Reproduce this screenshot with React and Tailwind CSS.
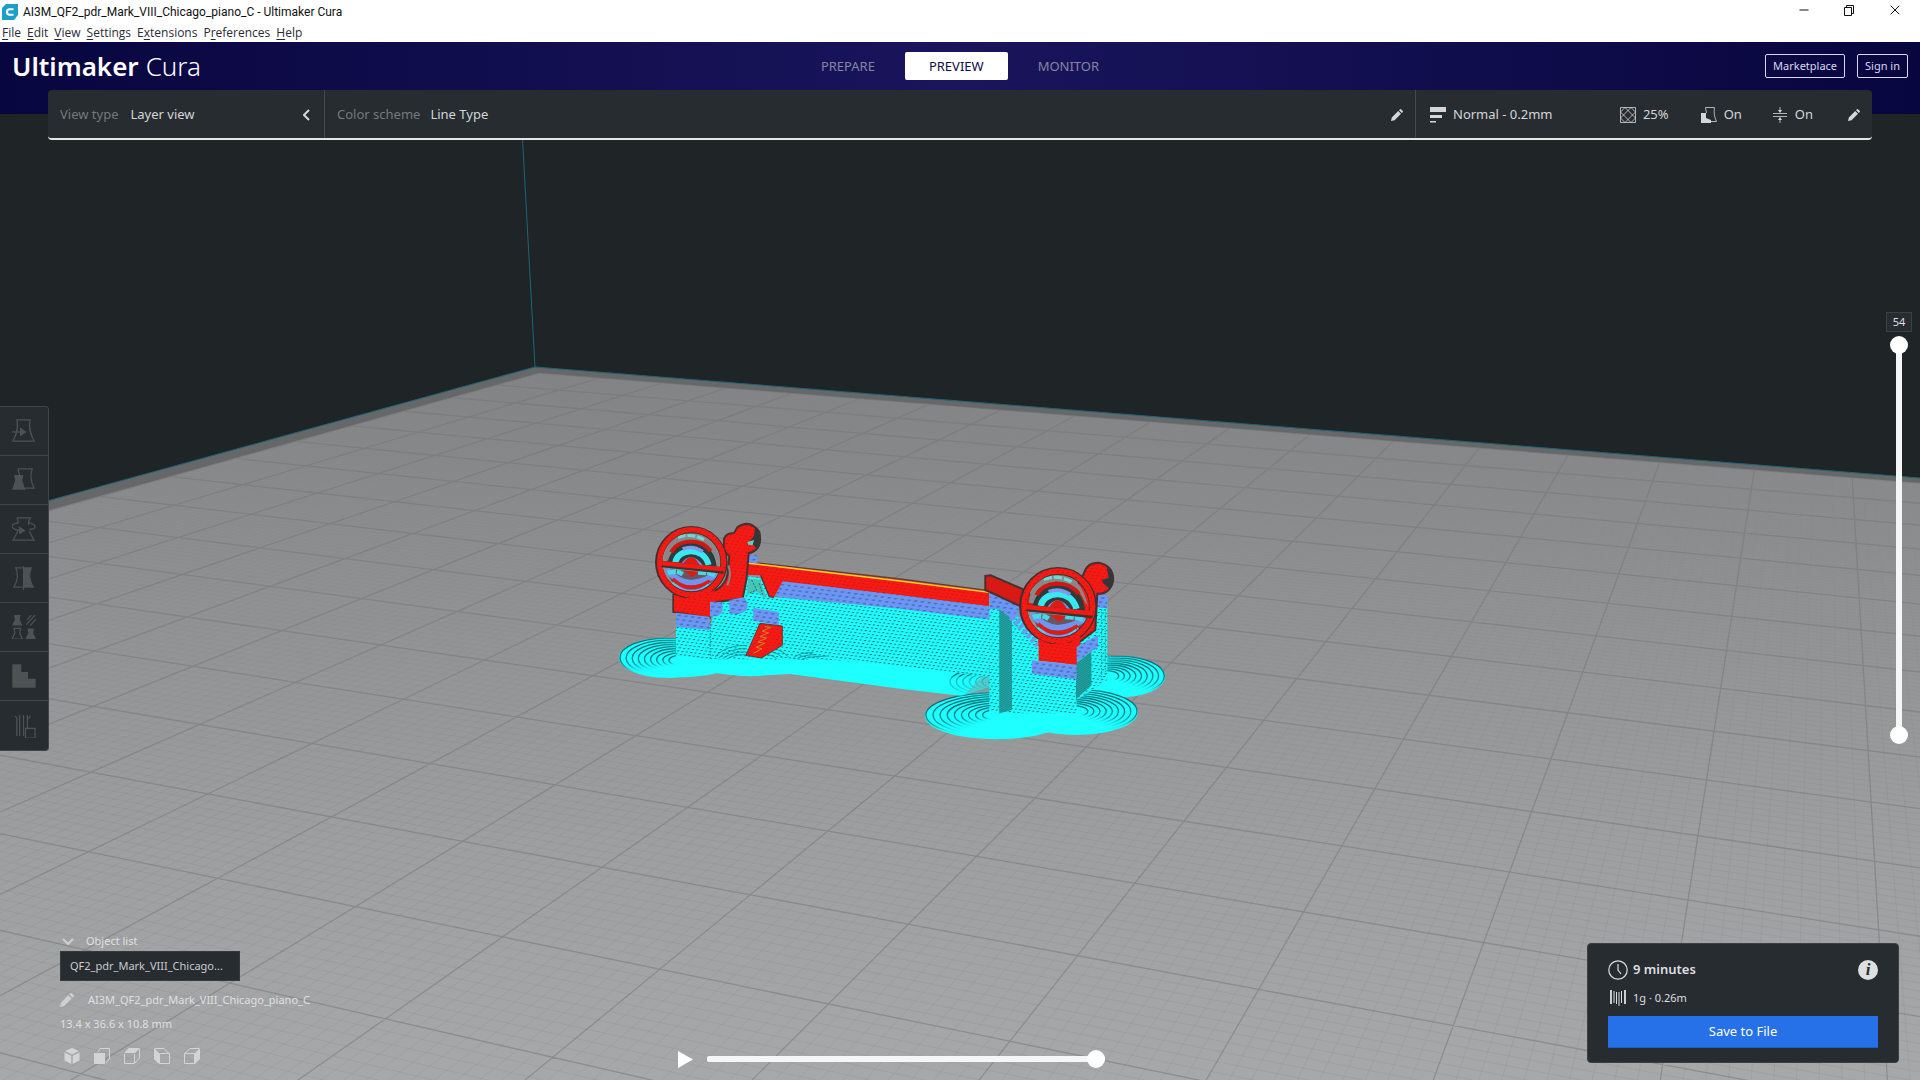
import { useState } from "react";
import { Minus, X } from "lucide-react";

const MENUS = [
  ["", "F", "ile"],
  ["", "E", "dit"],
  ["", "V", "iew"],
  ["", "S", "ettings"],
  ["E", "x", "tensions"],
  ["P", "r", "eferences"],
  ["", "H", "elp"],
];

const STAGES = ["PREPARE", "PREVIEW", "MONITOR"];

// Build plate projection: both vanishing points sit on the same horizon
const CORNER = { x: 539, y: 373 };
const HORIZON = 11;
const VANISH_A = -4000;
const VANISH_B = 1825;
const STEP_A = 0.0132;
const STEP_B = 0.0318;

const project = (i, j) => {
  const a = STEP_A * i;
  const b = STEP_B * j;
  const w = 1 - a - b;
  return [(CORNER.x - VANISH_A * a - VANISH_B * b) / w, (CORNER.y - HORIZON * (a + b)) / w];
};

const segment = (from, to) => {
  const [x1, y1] = project(...from);
  const [x2, y2] = project(...to);
  return `M${x1.toFixed(1)} ${y1.toFixed(1)}L${x2.toFixed(1)} ${y2.toFixed(1)}`;
};

const gridPath = (step) => {
  const parts = [];
  for (let n = 0; n <= 21 / step; n += 1) {
    const k = n * step;
    parts.push(segment([k, 0], [k, (0.88 - STEP_A * k) / STEP_B]));
    parts.push(segment([0, k], [(0.88 - STEP_B * k) / STEP_A, k]));
  }
  return parts.join("");
};

const MAJOR_GRID = gridPath(1);
const MINOR_GRID = gridPath(0.1);

const Rings = ({ cx, cy, rx, ry, dx = 0, dy = 0, stroke }) => (
  <g fill="none" stroke={stroke} strokeWidth="4">
    {[0, 1, 2, 3, 4, 5, 6, 7, 8].map((n) => (
      <ellipse key={n} cx={cx + dx * n} cy={cy + dy * n} rx={rx - n * (rx / 11)} ry={ry - n * (ry / 11)} />
    ))}
  </g>
);

const Wheel = ({ x, y, size = 1 }) => (
  <g transform={`translate(${x} ${y}) scale(${size})`}>
    <path d="M-72 4C-70 -78 72 -92 76 18Z" fill="#2f3a3c" />
    <path d="M-82 -10Q-74 -84 0 -90Q66 -86 84 0L74 -14Q52 -66 0 -68Q-50 -62 -70 -6Z" fill="#87888a" />
    <path d="M-60 -30C-40 -72 30 -74 58 -34" fill="none" stroke="#d01812" strokeWidth="12" />
    <path d="M-40 -74Q-4 -90 38 -68" fill="none" stroke="#6adcd6" strokeWidth="9" strokeDasharray="24 5" />
    <path d="M-48 0C-42 -40 36 -52 52 8" fill="none" stroke="#38eaf0" strokeWidth="18" />
    <path d="M-26 -40Q4 -52 34 -32" fill="none" stroke="#7f98f0" strokeWidth="11" />
    <path d="M-32 6Q0 -42 38 14Z" fill="#6f95f0" />
    <path d="M-24 2Q2 -38 26 10Z" fill="#dd1a14" />
    <path d="M-70 20Q-66 78 -6 92Q54 84 78 34Z" fill="#6d5560" />
    <path d="M-74 22Q-40 60 0 62Q50 56 76 34" fill="none" stroke="#6f95f0" strokeWidth="18" />
    <path d="M-70 32Q-46 22 -26 36M20 30Q54 30 74 40" fill="none" stroke="#45dbe6" strokeWidth="14" strokeDasharray="24 3" />
    <path d="M-56 50Q-10 96 56 56" fill="none" stroke="#dd1a14" strokeWidth="11" />
    <path d="M-50 68Q-4 106 52 70" fill="none" stroke="#8b99ef" strokeWidth="10" />
    <path d="M-58 62L-36 82M32 84L58 64" stroke="#45dbe6" strokeWidth="10" strokeDasharray="12 3" />
    <path d="M-24 24L22 28L4 44Z" fill="#dd1a14" />
    <ellipse rx="98" ry="98" fill="none" stroke="#40302f" strokeWidth="22" />
    <ellipse rx="96" ry="98" cx="1" fill="none" stroke="url(#red)" strokeWidth="16" />
    <path d="M-88 5L98 25" stroke="#40302f" strokeWidth="19" />
    <path d="M-92 2L98 21" stroke="#ee1c14" strokeWidth="13" />
  </g>
);

const Model = () => (
  <g transform="translate(600 500) scale(0.3333)">
    {/* brim */}
    <g fill="#1effff">
      <ellipse cx="196" cy="473" rx="139" ry="60" />
      <ellipse cx="450" cy="470" rx="150" ry="58" />
      <path d="M200 533Q290 534 350 520Q420 532 480 527L570 522L900 566L1090 588L1170 505L620 440H220Z" />
      <ellipse cx="1190" cy="648" rx="215" ry="70" />
      <ellipse cx="1430" cy="637" rx="184" ry="68" />
      <ellipse cx="1560" cy="530" rx="136" ry="62" />
    </g>
    <Rings cx={196} cy={473} rx={136} ry={58} dx={6} dy={1} stroke="url(#fadeRight)" />
    <Rings cx={1190} cy={645} rx={212} ry={67} dx={2} stroke="url(#fadeRight)" />
    <Rings cx={1240} cy={545} rx={190} ry={50} dx={2} stroke="url(#fadeRight)" />
    <Rings cx={1430} cy={634} rx={181} ry={65} dx={-2} stroke="url(#fadeLeft)" />
    <Rings cx={1560} cy={528} rx={133} ry={59} dx={-5} stroke="url(#fadeLeft)" />
    <path d="M1000 540L1170 520V560L1080 590Z" fill="#1effff" opacity="0.5" />

    {/* support wall */}
    <path d="M228 378L330 388L350 300L430 290L440 228L480 234L515 290L900 322L1168 354V530L960 505L700 480L330 478L228 468Z" fill="url(#cyan)" />
    <g fill="none" stroke="#128088" strokeWidth="3" strokeOpacity="0.75">
      <path d="M345 470Q380 434 440 436M356 474Q390 444 440 446M368 476Q396 454 440 456M380 478Q402 462 440 464" />
      <path d="M520 446Q550 452 566 472M510 454Q536 460 548 474M500 462Q520 466 530 476" />
      <path d="M580 474Q600 456 640 458M592 476Q610 464 650 464M604 478Q624 470 680 468" />
    </g>
    <path d="M331 345V478" stroke="#168a8a" strokeWidth="3" strokeDasharray="5 4" />
    <path d="M445 235L480 240L500 295L470 275L440 285Z" fill="#46c4b8" />
    <path d="M455 240L470 270L450 278M478 250L490 290" stroke="#20706c" strokeWidth="3" fill="none" strokeDasharray="6 4" />
    <path d="M540 243L900 283L1168 316V358L900 326L525 290Z" fill="url(#blue)" />

    {/* beam */}
    <path d="M425 186L900 240L1168 275V318L900 285L548 244L522 292L508 288L482 226L430 224Z" fill="url(#red)" />
    <path d="M482 226L508 290L522 292" fill="none" stroke="#56302f" strokeWidth="4" />
    <path d="M430 184L900 237L1168 272" fill="none" stroke="#6b3a25" strokeWidth="4" />
    <path d="M440 189L900 243L1168 277" fill="none" stroke="#ffd02a" strokeWidth="4" />

    {/* left carriage */}
    <path d="M425 162L472 166V190L425 186Z" fill="url(#blue)" />
    <path d="M372 130Q368 100 402 99L412 82Q450 56 478 96Q490 148 446 160L440 235L428 296L350 306L330 352L220 336V285Q380 300 384 210L388 168Q368 156 372 130Z" fill="url(#red)" stroke="#4a302f" strokeWidth="6" />
    <path d="M466 80Q488 108 474 148L456 132L440 134L462 108Z" fill="#2f393b" />
    <path d="M442 126L462 120L458 136L444 134Z" fill="#62cfc4" />
    <path d="M385 196Q396 226 382 256" fill="none" stroke="#858687" strokeWidth="6" />
    <Wheel x={274} y={187} />
    <path d="M222 284L250 294L300 290L345 270V310L328 350L222 334Z" fill="url(#red)" />
    <path d="M228 338L329 350V390L228 380Z" fill="url(#blue)" />
    <path d="M330 305L366 306Q376 338 352 348L330 350Z" fill="url(#blue)" />
    <path d="M388 300L430 292Q448 304 440 328Q424 348 388 340Z" fill="url(#blue)" />
    <path d="M460 324L536 336V376L460 362Z" fill="url(#blue)" />
    <path d="M480 370L547 378V436L484 474L438 466Z" fill="url(#red)" stroke="#5c3a34" strokeWidth="3" />
    <path d="M494 380L512 382L486 394L506 398L480 410L500 414L474 426L494 430L468 442L486 446L460 460" fill="none" stroke="#c8862c" strokeWidth="3" />

    {/* right carriage */}
    <path d="M1490 285H1522V540L1430 600V440Z" fill="url(#cyan)" />
    <path d="M1505 320V540M1516 320V530" stroke="#1a9c9c" strokeWidth="3" strokeDasharray="4 4" />
    <path d="M1490 282L1522 284V325L1490 322Z" fill="url(#blue)" />
    <path d="M1235 330L1340 430L1430 530V640L1200 640Z" fill="url(#cyan)" />
    <path d="M1168 278L1200 280V640L1168 635Z" fill="url(#cyan)" />
    <path d="M1198 325L1236 345V630L1198 640Z" fill="#24b3b3" />
    <path d="M1198 325L1236 345V630L1198 640Z" fill="url(#hatch)" />
    <path d="M1168 278L1200 280L1262 312L1242 362L1198 328L1168 326Z" fill="url(#blue)" />
    <path d="M1240 345L1320 430" stroke="#6f95f0" strokeWidth="36" strokeDasharray="11 7" opacity="0.9" />
    <path d="M1428 490L1474 455V556L1428 598Z" fill="#25adad" />
    <path d="M1428 490L1474 455V556L1428 598Z" fill="url(#hatch)" />
    <path d="M1156 228L1172 226L1270 268L1310 300L1290 332L1170 276L1156 270Z" fill="#d81a14" stroke="#4a302f" strokeWidth="6" />
    <path d="M1430 260L1452 220Q1460 188 1496 188Q1540 196 1540 240Q1532 282 1492 282L1486 390L1420 440L1440 400Z" fill="url(#red)" stroke="#4a302f" strokeWidth="6" />
    <path d="M1520 200Q1552 230 1530 266L1512 252L1504 240L1526 234Z" fill="#2f393b" />
    <Wheel x={1374} y={318} size={1.07} />
    <path d="M1314 416L1350 432L1410 428L1440 408V440L1430 494L1316 482V438Z" fill="url(#red)" />
    <path d="M1430 440L1494 406V440L1430 486Z" fill="url(#blue)" />
    <path d="M1296 481L1430 495V538L1296 521Z" fill="url(#blue)" />
  </g>
);

const Scene = () => (
  <svg aria-hidden="true" className="absolute inset-0 h-full w-full" viewBox="0 0 1920 1080" preserveAspectRatio="xMidYMid slice">
    <defs>
      <linearGradient id="plate" x1="0" y1="370" x2="0" y2="1080" gradientUnits="userSpaceOnUse">
        <stop offset="0" stopColor="#828385" />
        <stop offset="0.3" stopColor="#8f9092" />
        <stop offset="0.65" stopColor="#9d9e9f" />
        <stop offset="1" stopColor="#a7a8aa" />
      </linearGradient>
      <linearGradient id="minorFade" x1="0" y1="400" x2="0" y2="800" gradientUnits="userSpaceOnUse">
        <stop offset="0" stopColor="#77787a" stopOpacity="0.04" />
        <stop offset="1" stopColor="#77787a" stopOpacity="0.16" />
      </linearGradient>
      <linearGradient id="fadeRight" x1="0" y1="0.2" x2="0.8" y2="0.8">
        <stop offset="0" stopColor="#0b5c66" />
        <stop offset="0.35" stopColor="#0f8b92" stopOpacity="0.8" />
        <stop offset="0.65" stopColor="#1effff" stopOpacity="0" />
      </linearGradient>
      <linearGradient id="fadeLeft" x1="0.2" y1="0.8" x2="1" y2="0.2">
        <stop offset="0.35" stopColor="#1effff" stopOpacity="0" />
        <stop offset="0.65" stopColor="#0f8b92" stopOpacity="0.8" />
        <stop offset="1" stopColor="#0b5c66" />
      </linearGradient>
      <pattern id="cyan" width="13" height="10" patternUnits="userSpaceOnUse" patternTransform="skewY(7) skewX(-28)">
        <rect width="13" height="10" fill="#22fbfb" />
        <path d="M2 4h6" stroke="#0d6f76" strokeWidth="3" />
      </pattern>
      <pattern id="red" width="14" height="10" patternUnits="userSpaceOnUse" patternTransform="skewY(7) skewX(-28)">
        <rect width="14" height="10" fill="#f61a14" />
        <path d="M2 4h5" stroke="#a81410" strokeWidth="2" />
      </pattern>
      <pattern id="blue" width="20" height="13" patternUnits="userSpaceOnUse" patternTransform="skewY(7) skewX(-28)">
        <rect width="20" height="13" fill="#6b96f3" />
        <path d="M2 5h9" stroke="#3c5599" strokeWidth="3" />
      </pattern>
      <pattern id="hatch" width="6" height="6" patternUnits="userSpaceOnUse" patternTransform="skewY(-30)">
        <path d="M0 2h6" stroke="#15787a" strokeWidth="2" />
      </pattern>
    </defs>
    <rect width="1920" height="1080" fill="#1f2527" />
    <path d="M0 514L535 367L1920 478V1080H0Z" fill="#666768" />
    <path d="M0 524L539 373L1920 483V1080H0Z" fill="url(#plate)" />
    <path d="M0 514L535 367L1920 478M522 130L535 367" fill="none" stroke="#1f6477" strokeWidth="1" />
    <path d={MINOR_GRID} fill="none" stroke="url(#minorFade)" strokeWidth="1" />
    <path d={MAJOR_GRID} fill="none" stroke="#707173" strokeOpacity="0.4" strokeWidth="1.300" />
    <Model />
  </svg>
);

const AppLogo = () => (
  <svg aria-hidden="true" viewBox="0 0 16 16" className="h-4 w-4">
    <path d="M4 0H16V11L12 16H0V4Z" fill="#1b9fc6" />
    <path d="M11.500 5.200H7.500Q5 5.200 5 8Q5 10.800 7.500 10.800H11.500" fill="none" stroke="#fff" strokeWidth="2" />
  </svg>
);

const PencilIcon = ({ className }) => (
  <svg aria-hidden="true" viewBox="0 0 12 12" className={className} fill="currentColor">
    <path d="M0 12L0.800 8.400L7.200 2L10 4.800L3.600 11.200ZM8 1.200L9 0.200Q9.500 -0.200 10 0.200L11.800 2Q12.200 2.500 11.800 3L10.800 4Z" />
  </svg>
);

const QualityIcon = () => (
  <svg aria-hidden="true" viewBox="0 0 16 16" className="h-4 w-4" fill="currentColor">
    <path d="M0 0H16V5H0ZM0 8H12V11H0ZM0 14H6V15.500H0Z" />
  </svg>
);

const InfillIcon = () => (
  <svg aria-hidden="true" viewBox="0 0 16 16" className="h-4 w-4" fill="none" stroke="currentColor" strokeWidth="0.800">
    <path d="M0.500 0.500H15.500V15.500H0.500ZM0.500 5L5 0.500L15.500 11M11 0.500L0.500 11L5 15.500L15.500 5L11 0.500M0.500 5L11 15.500L15.500 11" />
  </svg>
);

const SupportIcon = () => (
  <svg aria-hidden="true" viewBox="0 0 16 16" className="h-4 w-4">
    <path d="M4.500 0.500H13.500C12.500 6 13.500 10 15.500 14.500H10M4.500 0.500L5.500 6" fill="none" stroke="currentColor" strokeWidth="0.800" />
    <path d="M0 6H5V11L10 13V16H0Z" fill="currentColor" />
  </svg>
);

const AdhesionIcon = () => (
  <svg aria-hidden="true" viewBox="0 0 16 16" className="h-4 w-4">
    <path d="M1 6.500H15M1 9.500H15M8 0V4M8 12V16" stroke="currentColor" strokeWidth="0.800" />
    <path d="M6 3H10L8 6ZM6 13H10L8 10Z" fill="currentColor" />
  </svg>
);

const VASE = "M5 1H19C17 9 19 15 23 23H1C5 15 7 9 5 1Z";

const TOOLS = [
  {
    name: "Move",
    icon: (
      <>
        <path d={VASE} />
        <path d="M0 13.500H10" />
        <path d="M9 10L14 13.500L9 17Z" fill="currentColor" />
      </>
    ),
  },
  {
    name: "Scale",
    icon: (
      <>
        <path d="M6 1H21C18 9 20 15 23 21H13M6 1L8 8" />
        <path d="M3 8H11L10 13L13 22H1L4 13Z" fill="currentColor" />
      </>
    ),
  },
  {
    name: "Rotate",
    icon: (
      <>
        <path d="M5 1H19Q17 4 17 8M18 15Q20 19 23 24H1Q5 18 6 14M5 1Q7 4 6 7" />
        <path d="M6 6Q0 7 0 10Q1 13 8 14M17 6Q24 7 24 10Q24 13 18 13" />
        <path d="M8 11L13 14L8 17Z" fill="currentColor" />
      </>
    ),
  },
  {
    name: "Mirror",
    icon: (
      <>
        <path d="M11 2H4C7 9 6 15 2 22H11" />
        <path d="M12 0V25" />
        <path d="M13 2H20C17 9 18 15 22 22H13Z" fill="currentColor" />
      </>
    ),
  },
  {
    name: "Per Model Settings",
    icon: (
      <>
        <path d="M2 0H9L8 5L11 11H0L3 5ZM16 14H23L22 19L25 25H14L17 19Z" fill="currentColor" stroke="none" />
        <path d="M16 5L20 0M15 10L24 0M19 11L25 4" />
        <path d="M2 14H9L8 19L11 25H0L3 19Z" />
      </>
    ),
  },
  { name: "Support Blocker", icon: <path d="M1 1H9V9H16V16H24V24H1Z" fill="currentColor" /> },
  {
    name: "Custom Supports",
    icon: (
      <>
        <path d="M3 2L5 4V23M8 1V23M12 1V23M16 1V16M19 2L17 5" />
        <path d="M14 15H24V25H14Z" />
      </>
    ),
  },
];

const VIEWS = [
  {
    name: "3D View",
    icon: <path d="M8 0L15 3L8 6.500L1 3ZM0.500 4.500L7.300 7.800V16L0.500 12.500ZM15.500 4.500L8.700 7.800V16L15.500 12.500Z" fill="currentColor" />,
  },
  {
    name: "Front View",
    icon: (
      <>
        <path d="M0 5H11V16H0Z" fill="currentColor" />
        <path d="M4 4L6 0.500H15.500V11L12 15" fill="none" stroke="currentColor" />
      </>
    ),
  },
  {
    name: "Top View",
    icon: (
      <>
        <path d="M0 5L5 0H16L11 5Z" fill="currentColor" />
        <path d="M0.500 6V15.500H10.500V6M15.500 1V10L11 15" fill="none" stroke="currentColor" />
      </>
    ),
  },
  {
    name: "Left View",
    icon: (
      <>
        <path d="M0 0L5 5V16L0 11Z" fill="currentColor" />
        <path d="M1 0.500H10L15 5.500M5.500 5.500H15.500V15.500H5.500Z" fill="none" stroke="currentColor" />
      </>
    ),
  },
  {
    name: "Right View",
    icon: (
      <>
        <path d="M16 0L11 5V16L16 11Z" fill="currentColor" />
        <path d="M15 0.500H6L0.500 5.500M0.500 5.500H10.500V15.500H0.500Z" fill="none" stroke="currentColor" />
      </>
    ),
  },
];

const TitleBar = () => (
  <div className="flex h-6 items-center bg-white pl-[2px] text-[#111]">
    <AppLogo />
    <h1 className="ml-[5px] font-['Roboto',sans-serif] text-xs">AI3M_QF2_pdr_Mark_VIII_Chicago_piano_C - Ultimaker Cura</h1>
    <div className="ml-auto flex items-center gap-8 pr-[17px] pb-1">
      <button type="button" aria-label="Minimize">
        <Minus className="h-3.5 w-3.5" strokeWidth={2} />
      </button>
      <button type="button" aria-label="Restore">
        <svg viewBox="0 0 12 12" className="h-3 w-3" fill="none" stroke="currentColor">
          <path d="M1.500 3.500H8.500V11.500H1.500ZM3.500 3V1.500H10.500V9.500H9" />
        </svg>
      </button>
      <button type="button" aria-label="Close">
        <X className="h-4 w-4" strokeWidth={1.5} />
      </button>
    </div>
  </div>
);

const MenuBar = () => (
  <nav className="flex h-[18px] items-center gap-1.5 bg-white pl-[2px] font-['Open_Sans',sans-serif] text-xs text-[#2a2a35]">
    {MENUS.map(([before, key, after]) => (
      <button type="button" key={before + key + after}>
        {before}
        <span className="underline underline-offset-2">{key}</span>
        {after}
      </button>
    ))}
  </nav>
);

const Header = ({ stage, onStage }) => (
  <header className="grid h-[72px] grid-cols-[1fr_auto_1fr] items-start bg-linear-to-r from-[#08063f] via-[#1a155c] to-[#08063f] px-3">
    <div className="flex h-12 items-center gap-[7px] text-[26px] text-white">
      <span className="font-semibold">Ultimaker</span>
      <span className="font-light">Cura</span>
    </div>
    <nav className="flex h-12 items-center gap-1.5 text-[13px]">
      {STAGES.map((name) => (
        <button
          type="button"
          key={name}
          onClick={() => onStage(name)}
          className={
            name === stage
              ? "h-7 rounded-xs bg-white px-6 pt-px text-[#0e0a4a]"
              : "h-7 rounded-xs px-6 pt-px text-[#8683a4]"
          }
        >
          {name}
        </button>
      ))}
    </nav>
    <div className="flex h-12 items-center justify-end gap-3 text-[11px] text-[#d9d8ee]">
      <button type="button" className="h-6 rounded-xs border border-[#d9d8ee] px-[7px] pt-px">
        Marketplace
      </button>
      <button type="button" className="h-6 rounded-xs border border-[#d9d8ee] px-[7px] pt-px">
        Sign in
      </button>
    </div>
  </header>
);

const StageMenu = () => (
  <div className="z-10 mx-12 -mt-6 flex h-[50px] rounded-sm border-b-2 border-[#e4e6e6] bg-[#272c30] text-[13px] text-[#d4d6d7]">
    <button type="button" className="flex w-[277px] items-center border-r border-[#45494c] px-3 pt-0.5">
      <span className="text-[#75797c]">View type</span>
      <span className="ml-3">Layer view</span>
      <svg aria-hidden="true" viewBox="0 0 7 12" className="mr-0.5 ml-auto h-3 w-[7px]" fill="none" stroke="currentColor" strokeWidth="2">
        <path d="M6 1L1 6L6 11" />
      </svg>
    </button>
    <button type="button" className="flex flex-1 items-center border-r border-[#45494c] px-3 pt-0.5">
      <span className="text-[#75797c]">Color scheme</span>
      <span className="ml-2.5">Line Type</span>
      <PencilIcon className="ml-auto h-3 w-3" />
    </button>
    <button type="button" className="flex w-[456px] items-center pt-0.5 pr-3 pl-[14px]">
      <QualityIcon />
      <span className="ml-[7px]">Normal - 0.2mm</span>
      <span className="ml-auto flex items-center gap-[7px]">
        <InfillIcon />
        25%
      </span>
      <span className="ml-8 flex items-center gap-[7px]">
        <SupportIcon />
        On
      </span>
      <span className="ml-[30px] flex items-center gap-[7px]">
        <AdhesionIcon />
        On
      </span>
      <PencilIcon className="ml-[35px] h-3 w-3" />
    </button>
  </div>
);

const ToolBar = () => (
  <div className="flex w-[49px] flex-col divide-y divide-[#404548] rounded-r-sm border border-l-0 border-[#404548] bg-[#272c30] text-[#4d5255]">
    {TOOLS.map((tool) => (
      <button type="button" key={tool.name} aria-label={tool.name} className="flex h-[49px] items-center justify-center">
        <svg viewBox="0 0 25 25" className="h-6 w-6" fill="none" stroke="currentColor" strokeWidth="1.300">
          {tool.icon}
        </svg>
      </button>
    ))}
  </div>
);

const THUMB =
  "[&::-webkit-slider-thumb]:pointer-events-auto [&::-webkit-slider-thumb]:h-[18px] [&::-webkit-slider-thumb]:w-[18px] [&::-webkit-slider-thumb]:appearance-none [&::-webkit-slider-thumb]:rounded-full [&::-webkit-slider-thumb]:bg-white";

const LayerSlider = () => {
  const [top, setTop] = useState(54);
  const [bottom, setBottom] = useState(1);
  const range = `pointer-events-none col-start-1 row-start-1 h-[408px] w-[18px] appearance-none bg-transparent [direction:rtl] [writing-mode:vertical-lr] ${THUMB}`;

  return (
    <div className="mr-2 flex w-[26px] flex-col items-center">
      <output className="flex h-5 w-[26px] items-center justify-center border border-[#3c4144] bg-[#272c30] text-[11px] text-[#dedfe0]">{top}</output>
      <div className="mt-1 grid justify-items-center">
        <div className="col-start-1 row-start-1 my-2 w-1.5 bg-[#f5f6f6]" />
        <input type="range" aria-label="Lowest layer" min="1" max="54" value={bottom} onChange={(event) => setBottom(Number(event.target.value))} className={range} />
        <input type="range" aria-label="Highest layer" min="1" max="54" value={top} onChange={(event) => setTop(Number(event.target.value))} className={range} />
      </div>
    </div>
  );
};

const PathSlider = () => {
  const [step, setStep] = useState(100);

  return (
    <div className="mb-3 ml-1.5 flex shrink-0 items-center gap-[14px]">
      <button type="button" aria-label="Play">
        <svg viewBox="0 0 15 17" className="h-[17px] w-[15px]" fill="#fff">
          <path d="M0 0L15 8.500L0 17Z" />
        </svg>
      </button>
      <input
        type="range"
        aria-label="Path position"
        value={step}
        onChange={(event) => setStep(Number(event.target.value))}
        className={`h-[18px] w-[398px] appearance-none bg-transparent [&::-webkit-slider-runnable-track]:h-1.5 [&::-webkit-slider-runnable-track]:rounded-xs [&::-webkit-slider-runnable-track]:bg-[#f5f6f6] [&::-webkit-slider-thumb]:-mt-1.5 ${THUMB}`}
      />
    </div>
  );
};

const ObjectInfo = () => (
  <div className="mb-4 flex w-[35%] flex-col items-start pl-[60px] text-[11px] text-[#dfe0e1]">
    <button type="button" className="flex h-5 items-center">
      <svg aria-hidden="true" viewBox="0 0 12 7" className="ml-0.5 h-[7px] w-3" fill="none" stroke="#cfd0d1" strokeWidth="2">
        <path d="M1 1L6 6L11 1" />
      </svg>
      <span className="ml-3">Object list</span>
    </button>
    <button type="button" className="h-[30px] w-[180px] truncate border border-[#34393c] bg-[#272c30] px-[9px] text-left text-[#c9cbcc]">
      QF2_pdr_Mark_VIII_Chicago...
    </button>
    <button type="button" className="mt-[7px] flex h-6 items-center gap-[14px]">
      <PencilIcon className="h-[14px] w-[14px] text-[#cfd0d1]" />
      AI3M_QF2_pdr_Mark_VIII_Chicago_piano_C
    </button>
    <p className="h-6 leading-6">13.4 x 36.6 x 10.8 mm</p>
    <div className="mt-3 ml-1 flex gap-3.5 text-[#d3d4d5]">
      {VIEWS.map((view) => (
        <button type="button" key={view.name} aria-label={view.name}>
          <svg viewBox="0 0 16 16" className="h-4 w-4">
            {view.icon}
          </svg>
        </button>
      ))}
    </div>
  </div>
);

const ActionPanel = () => (
  <section className="mr-[21px] mb-[17px] ml-auto flex h-[120px] w-[312px] flex-col rounded-sm border border-[#3b4043] bg-[#272c30] px-5 pt-4 text-[#dedfe0]">
    <div className="flex h-5 items-center gap-[5px]">
      <svg aria-hidden="true" viewBox="0 0 20 20" className="h-5 w-5" fill="none" stroke="currentColor" strokeWidth="1.200">
        <circle cx="10" cy="10" r="9.200" />
        <path d="M10 4V10L13 14" />
      </svg>
      <span className="text-[13px] font-semibold">9 minutes</span>
      <button
        type="button"
        aria-label="Print details"
        className="ml-auto h-5 w-5 rounded-full bg-[#dedfe0] font-['Liberation_Serif',serif] text-[17px] leading-5 font-bold text-[#272c30] italic"
      >
        i
      </button>
    </div>
    <div className="mt-2 flex h-5 items-center gap-[7px] text-[11px]">
      <svg aria-hidden="true" viewBox="0 0 16 18" className="ml-0.5 h-[18px] w-4" stroke="currentColor">
        <path d="M1 1V15M15 1V15" strokeWidth="1.800" />
        <path d="M4 2V14M6.500 3V15M9 3V17M11.500 2V14" strokeWidth="1" />
      </svg>
      1g · 0.26m
    </div>
    <button type="button" className="mt-2 h-8 border-b border-[#1d5fc4] bg-[#2670e8] text-[13px] text-white">
      Save to File
    </button>
  </section>
);

const App = () => {
  const [stage, setStage] = useState("PREVIEW");

  return (
    <div className="relative min-h-screen bg-[#1f2527] font-['Noto_Sans',sans-serif]">
      <Scene />
      <div className="relative flex min-h-screen flex-col">
        <TitleBar />
        <MenuBar />
        <Header stage={stage} onStage={setStage} />
        <StageMenu />
        <main className="flex flex-1 flex-col justify-between">
          <div className="flex items-start justify-between">
            <div className="pt-[266px]">
              <ToolBar />
            </div>
            <div className="pt-[172px]">
              <LayerSlider />
            </div>
          </div>
          <div className="flex items-end">
            <ObjectInfo />
            <PathSlider />
            <ActionPanel />
          </div>
        </main>
      </div>
    </div>
  );
};

export default App;
